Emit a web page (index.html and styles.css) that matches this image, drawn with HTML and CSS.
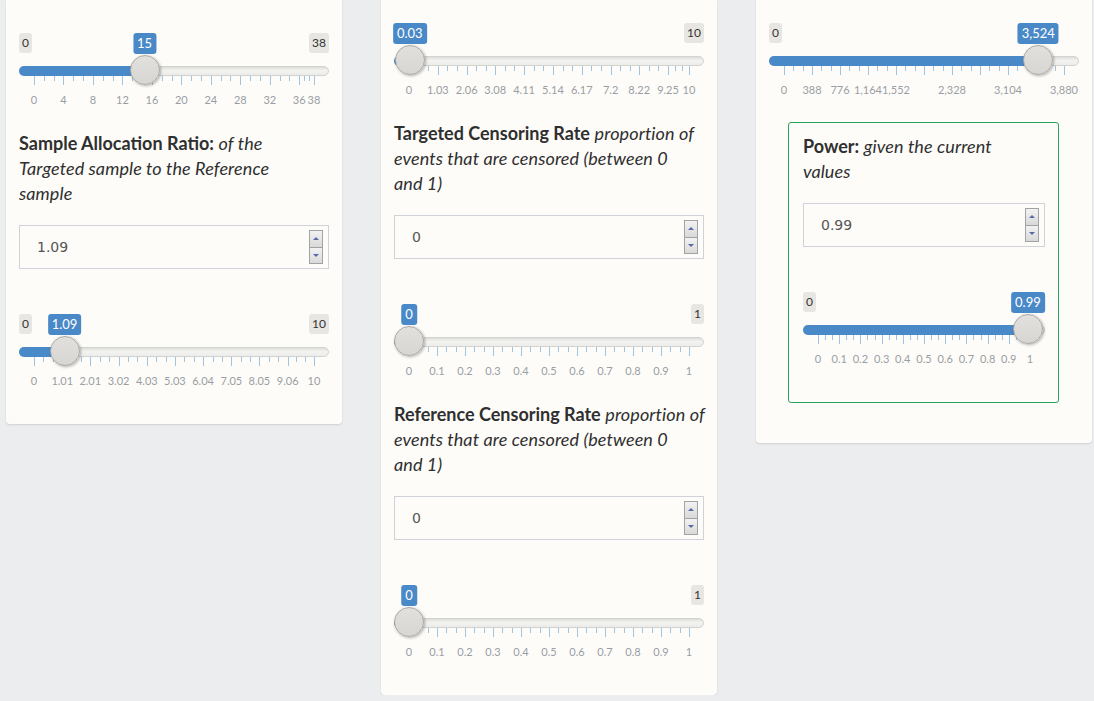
FILE: index.html
```html
<!DOCTYPE html>
<html lang="en">
<head>
<meta charset="utf-8">
<title>Power calculator</title>
<link rel="stylesheet" href="styles.css">
</head>
<body>
<div class="page">

  <section class="card card--first">
    <div class="irs" data-max="38" data-ticks="0,4,8,12,16,20,24,28,32,36,38">
      <span class="irs-min">0</span>
      <span class="irs-max">38</span>
      <div class="irs-line"></div>
      <div class="irs-bar" style="--p:0.3947"></div>
      <div class="irs-grid"></div>
      <span class="irs-handle" style="--p:0.3947"></span>
      <span class="irs-single" style="--p:0.3947">15</span>
    </div>
    <label class="control-label"><b>Sample Allocation Ratio:</b> <i>of the<br>Targeted sample to the Reference<br>sample</i></label>
    <div class="num-input">
      <span class="num-value">1.09</span>
      <span class="spin"><span class="spin-btn up"></span><span class="spin-btn down"></span></span>
    </div>
    <div class="irs irs--last" data-max="10" data-ticks="0,1.01,2.01,3.02,4.03,5.03,6.04,7.05,8.05,9.06,10">
      <span class="irs-min">0</span>
      <span class="irs-max">10</span>
      <div class="irs-line"></div>
      <div class="irs-bar" style="--p:0.109"></div>
      <div class="irs-grid"></div>
      <span class="irs-handle" style="--p:0.109"></span>
      <span class="irs-single" style="--p:0.109">1.09</span>
    </div>
  </section>

  <section class="card">
    <div class="irs" data-max="10" data-ticks="0,1.03,2.06,3.08,4.11,5.14,6.17,7.2,8.22,9.25,10">
      <span class="irs-max">10</span>
      <div class="irs-line"></div>
      <div class="irs-bar" style="--p:0.003"></div>
      <div class="irs-grid"></div>
      <span class="irs-handle" style="--p:0.003"></span>
      <span class="irs-single" style="--p:0.003">0.03</span>
    </div>
    <label class="control-label"><b>Targeted Censoring Rate</b> <i>proportion of<br>events that are censored (between 0<br>and 1)</i></label>
    <div class="num-input">
      <span class="num-value">0</span>
      <span class="spin"><span class="spin-btn up"></span><span class="spin-btn down"></span></span>
    </div>
    <div class="irs" data-max="1" data-ticks="0,0.1,0.2,0.3,0.4,0.5,0.6,0.7,0.8,0.9,1">
      <span class="irs-max">1</span>
      <div class="irs-line"></div>
      <div class="irs-bar" style="--p:0"></div>
      <div class="irs-grid"></div>
      <span class="irs-handle" style="--p:0"></span>
      <span class="irs-single" style="--p:0">0</span>
    </div>
    <label class="control-label"><b>Reference Censoring Rate</b> <i>proportion of<br>events that are censored (between 0<br>and 1)</i></label>
    <div class="num-input">
      <span class="num-value">0</span>
      <span class="spin"><span class="spin-btn up"></span><span class="spin-btn down"></span></span>
    </div>
    <div class="irs irs--last" data-max="1" data-ticks="0,0.1,0.2,0.3,0.4,0.5,0.6,0.7,0.8,0.9,1">
      <span class="irs-max">1</span>
      <div class="irs-line"></div>
      <div class="irs-bar" style="--p:0"></div>
      <div class="irs-grid"></div>
      <span class="irs-handle" style="--p:0"></span>
      <span class="irs-single" style="--p:0">0</span>
    </div>
  </section>

  <section class="card card--last">
    <div class="irs irs--boxed" data-max="3880" data-ticks="0,388,776,1164,1552,1940,2328,2716,3104,3492,3880" data-labels="0|388|776|1,164|1,552||2,328||3,104||3,880">
      <span class="irs-min">0</span>
      <div class="irs-line"></div>
      <div class="irs-bar" style="--p:0.9082"></div>
      <div class="irs-grid"></div>
      <span class="irs-handle" style="--p:0.9082"></span>
      <span class="irs-single" style="--p:0.9082">3,524</span>
    </div>
    <div class="result-box">
      <label class="control-label"><b>Power:</b> <i>given the current<br>values</i></label>
      <div class="num-input">
        <span class="num-value">0.99</span>
        <span class="spin"><span class="spin-btn up"></span><span class="spin-btn down"></span></span>
      </div>
      <div class="irs irs--last" data-max="1" data-ticks="0,0.1,0.2,0.3,0.4,0.5,0.6,0.7,0.8,0.9,1">
        <span class="irs-min">0</span>
        <div class="irs-line"></div>
        <div class="irs-bar" style="--p:0.99"></div>
        <div class="irs-grid"></div>
        <span class="irs-handle" style="--p:0.99"></span>
        <span class="irs-single" style="--p:0.99">0.99</span>
      </div>
    </div>
  </section>

</div>
<script src="script.js"></script>
</body>
</html>
```

FILE: styles.css
```css
* {
  box-sizing: border-box;
}

body {
  margin: 0;
  background: #ecedef;
  font-family: Lato, "Liberation Sans", sans-serif;
  color: #333;
}

.page {
  display: flex;
  align-items: flex-start;
  gap: 39px;
  padding-left: 6px;
}

.card {
  width: 336px;
  background: #fdfcf9;
  border-radius: 0 0 4px 4px;
  box-shadow: 0 1px 2px rgba(0, 0, 0, 0.12);
  padding: 23px 13px 30px;
}

.card--first {
  padding-top: 33px;
}

.card--last {
  padding-bottom: 40px;
}

/* ---------- label ---------- */
.control-label {
  display: block;
  font-size: 18px;
  line-height: 25px;
  margin-bottom: 19px;
  color: #2f2f2f;
  white-space: nowrap;
}

.control-label b {
  font-weight: 700;
}

.control-label i {
  font-style: italic;
  letter-spacing: 0.1px;
}

/* ---------- numeric input ---------- */
.num-input {
  display: flex;
  align-items: center;
  height: 44px;
  border: 1px solid #cfd2d9;
  background: #fdfcf9;
  padding: 0 5px 0 17px;
  margin-bottom: 45px;
}

.num-value {
  flex: 1;
  font-family: "DejaVu Sans", sans-serif;
  font-size: 14px;
  color: #555;
}

.spin {
  display: flex;
  flex-direction: column;
  width: 14px;
  height: 34px;
  border: 1px solid #a3a3a3;
}

.spin-btn {
  flex: 1;
  display: flex;
  align-items: center;
  justify-content: center;
  background: linear-gradient(#f2f2f2, #d9d9d9);
}

.spin-btn.up {
  border-bottom: 1px solid #a3a3a3;
}

.spin-btn::after {
  content: "";
  border-left: 3px solid transparent;
  border-right: 3px solid transparent;
}

.spin-btn.up::after {
  border-bottom: 3px solid #5a68a8;
}

.spin-btn.down::after {
  border-top: 3px solid #5a68a8;
}

/* ---------- range slider ---------- */
.irs {
  position: relative;
  height: 80px;
  margin-bottom: 18px;
}

.irs--boxed {
  margin-bottom: 19px;
}

.irs--last {
  margin-bottom: 0;
}

.irs-min,
.irs-max,
.irs-single {
  position: absolute;
  top: 0;
  font-size: 12px;
  line-height: 14px;
  padding: 3px 3px;
  border-radius: 3px;
  white-space: nowrap;
}

.irs-min,
.irs-max {
  background: #e7e6e3;
  color: #333;
}

.irs-min {
  left: 0;
}

.irs-max {
  right: 0;
}

.irs-single {
  font-size: 13px;
  line-height: 15px;
  padding: 3px 4px;
  background: #4a89c8;
  color: #fff;
  left: calc(15px + var(--p) * (100% - 30px));
  transform: translateX(-50%);
}

.irs-line {
  position: absolute;
  top: 33px;
  left: 0;
  right: 0;
  height: 10px;
  border-radius: 5px;
  border: 1px solid #d2d2cf;
  background: linear-gradient(#dededb, #f3f3f1 45%, #ececea);
}

.irs-bar {
  position: absolute;
  top: 33px;
  left: 0;
  height: 10px;
  border-radius: 5px 0 0 5px;
  background: #4a89c8;
  width: calc(15px + var(--p) * (100% - 30px));
}

.irs-handle {
  position: absolute;
  top: 22px;
  left: calc(var(--p) * (100% - 30px));
  width: 30px;
  height: 30px;
  border-radius: 50%;
  border: 1px solid #aaa9a6;
  background: linear-gradient(#e1e0dd, #d7d6d3);
  box-shadow: 1px 1px 3px rgba(0, 0, 0, 0.3);
}

.irs-grid {
  position: absolute;
  top: 43px;
  left: 15px;
  right: 15px;
  height: 34px;
}

.irs-pol {
  position: absolute;
  top: 0;
  width: 1px;
  height: 9px;
  background: #428bca;
  opacity: 0.5;
}

.irs-pol.small {
  height: 5px;
}

.irs-grid-text {
  position: absolute;
  top: 17px;
  font-size: 11px;
  line-height: 13px;
  color: #9a9ea4;
  white-space: nowrap;
  transform: translateX(-50%);
}

/* ---------- result box ---------- */
.result-box {
  margin: 0 20px 0 19px;
  border: 1px solid #2ba55b;
  border-radius: 3px;
  padding: 11px 13px 30px 14px;
}
```

FILE: script.js
```js
document.querySelectorAll('.irs').forEach(function (slider) {
  var grid = slider.querySelector('.irs-grid');
  var max = parseFloat(slider.dataset.max);
  var ticks = slider.dataset.ticks.split(',').map(Number);
  var labels = slider.dataset.labels ? slider.dataset.labels.split('|') : slider.dataset.ticks.split(',');
  var prev = null;

  function pol(p, small) {
    var s = document.createElement('span');
    s.className = small ? 'irs-pol small' : 'irs-pol';
    s.style.left = p + '%';
    grid.appendChild(s);
  }

  ticks.forEach(function (t, i) {
    var p = t / max * 100;
    if (prev !== null) {
      pol(prev + (p - prev) / 3, true);
      pol(prev + (p - prev) * 2 / 3, true);
    }
    pol(p, false);
    if (labels[i]) {
      var txt = document.createElement('span');
      txt.className = 'irs-grid-text';
      txt.style.left = p + '%';
      txt.textContent = labels[i];
      grid.appendChild(txt);
    }
    prev = p;
  });
});
```
